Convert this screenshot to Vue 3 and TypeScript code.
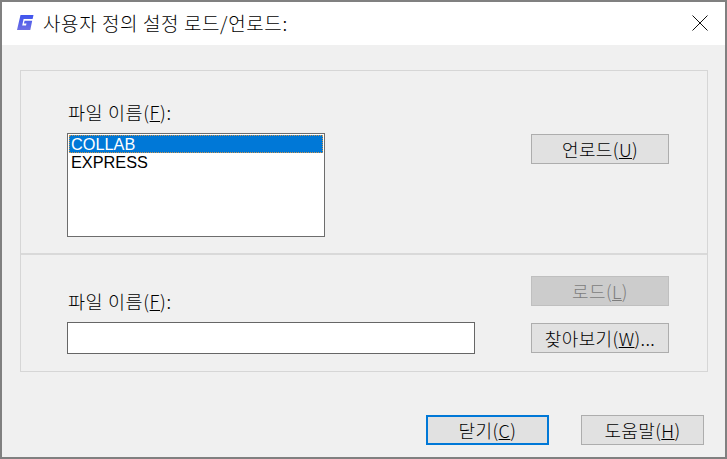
<script setup lang="ts">
const items: string[] = ['COLLAB', 'EXPRESS']
</script>

<template>
  <div class="dialog">
    <header class="titlebar">
      <svg class="logo" width="18" height="18" viewBox="0 0 18 18">
        <defs>
          <linearGradient id="g" x1="0" y1="0" x2="0" y2="1">
            <stop offset="0" stop-color="#3f55ee" />
            <stop offset="1" stop-color="#6f6fe4" />
          </linearGradient>
        </defs>
        <path fill-rule="evenodd" d="M4.5 1H17.5L16.6 5H7.6L6.2 11.5H10L10.5 9.5H7.9L8.6 6.8H16.2L14.3 16H1Z" fill="url(#g)" />
      </svg>
      <span class="title">사용자 정의 설정 로드/언로드:</span>
      <svg class="close" width="16" height="16" viewBox="0 0 16 16">
        <path d="M0.5 0.5L15.5 15.5M15.5 0.5L0.5 15.5" stroke="#111" stroke-width="1" fill="none" />
      </svg>
    </header>

    <main class="body">
      <div class="panel">
        <section class="section upper">
          <div class="left">
            <label class="label">파일 이름(<u>F</u>):</label>
            <div class="listbox">
              <div v-for="(item, i) in items" :key="item" class="option" :class="{ selected: i === 0 }">{{ item }}</div>
            </div>
          </div>
          <button class="btn side">언로드(<u>U</u>)</button>
        </section>
        <section class="section lower">
          <div class="left lower-left">
            <label class="label">파일 이름(<u>F</u>):</label>
            <div class="textinput"></div>
          </div>
          <div class="stack">
            <button class="btn side disabled">로드(<u>L</u>)</button>
            <button class="btn side">찾아보기(<u>W</u>)...</button>
          </div>
        </section>
      </div>
      <footer class="footer">
        <button class="btn wide focus">닫기(<u>C</u>)</button>
        <button class="btn wide">도움말(<u>H</u>)</button>
      </footer>
    </main>
  </div>
</template>

<style>
html, body { margin: 0; padding: 0; background: #f0f0f0; }
</style>

<style scoped>
.dialog {
  width: 727px;
  height: 459px;
  box-sizing: border-box;
  border: 2px solid #808080;
  background: #f0f0f0;
  display: flex;
  flex-direction: column;
  overflow: hidden;
  font-family: "Noto Sans CJK KR", "Liberation Sans", sans-serif;
  font-weight: 300;
  color: #000;
}
.titlebar {
  height: 43px;
  flex: none;
  background: #fff;
  display: flex;
  align-items: center;
  padding: 0 17px 0 14px;
}
.logo { flex: none; margin-top: -2px; }
.title {
  margin-left: 9px;
  font-size: 19px;
  font-weight: 300;
  line-height: 20px;
  letter-spacing: 0.6px;
  margin-top: -1px;
}
.close { margin-left: auto; margin-top: -2px; }
.body {
  flex: 1;
  display: flex;
  flex-direction: column;
  padding: 25px 17px 0 18px;
}
.panel {
  width: 688px;
  height: 302px;
  box-sizing: border-box;
  border: 1px solid #d6d6d6;
  flex: none;
}
.section {
  display: flex;
  justify-content: space-between;
  box-sizing: border-box;
  padding-left: 46px;
  padding-right: 38px;
}
.upper {
  height: 184px;
  border-bottom: 2px solid #d9d9d9;
  padding-top: 31px;
}
.lower {
  height: 116px;
  padding-top: 21px;
}
.left { display: flex; flex-direction: column; }
.lower-left { padding-top: 15px; }
.label {
  font-size: 18.5px;
  line-height: 20px;
  margin-left: 1px;
  letter-spacing: 0.6px;
}
.listbox {
  margin-top: 11px;
  width: 258px;
  height: 104px;
  box-sizing: border-box;
  border: 1px solid #6d6d6d;
  background: #fff;
  padding: 1px;
}
.option {
  height: 18px;
  line-height: 18px;
  font-size: 16.3px;
  padding-left: 2px;
  font-family: "Liberation Sans", sans-serif;
  font-weight: 400;
}
.selected {
  background: #0078d7;
  color: #fff;
  outline: 1px dotted #c9944f;
  outline-offset: -1px;
}
.textinput {
  margin-top: 11px;
  width: 408px;
  height: 32px;
  box-sizing: border-box;
  border: 1px solid #666;
  background: #fff;
}
.stack {
  display: flex;
  flex-direction: column;
  gap: 17px;
}
.btn {
  box-sizing: border-box;
  height: 30px;
  border: 1px solid #adadad;
  background: #e1e1e1;
  font-family: inherit;
  font-weight: 300;
  font-size: 18px;
  line-height: 20px;
  color: #000;
  padding: 0;
  letter-spacing: 0.4px;
}
.side { width: 138px; }
.upper > .side { margin-top: 32px; }
.wide { width: 123px; }
.disabled {
  background: #cccccc;
  color: #7d7d7d;
  border-color: #bfbfbf;
}
.focus {
  border: 2px solid #0078d7;
}
.footer {
  display: flex;
  justify-content: flex-end;
  gap: 32px;
  margin-top: 43px;
  width: 684px;
}
</style>
